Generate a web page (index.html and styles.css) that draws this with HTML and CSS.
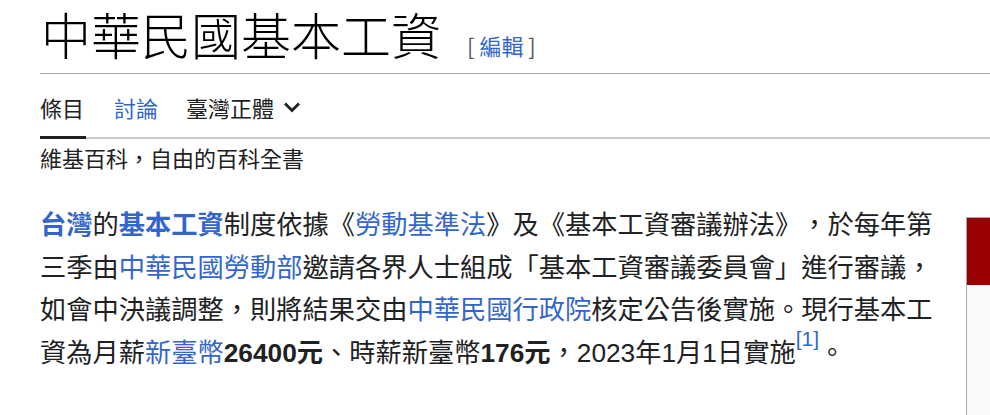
FILE: index.html
```html
<!DOCTYPE html>
<html lang="zh-Hant">
<head>
<meta charset="utf-8">
<title>中華民國基本工資</title>
<link rel="stylesheet" href="styles.css">
</head>
<body>
<div class="page">
  <header class="title-bar">
    <h1 class="title">中華民國基本工資</h1>
    <span class="edit"><span class="bracket">[</span> <a class="link" href="#">編輯</a> <span class="bracket">]</span></span>
  </header>
  <nav class="tabs">
    <a class="tab tab-active" href="#">條目</a>
    <a class="tab link" href="#">討論</a>
    <a class="tab tab-variant" href="#">臺灣正體
      <svg class="chev" width="18" height="18" viewBox="0 0 18 18"><path d="M2 5.5 L9 12.5 L16 5.5" fill="none" stroke="#202122" stroke-width="2.8"/></svg>
    </a>
  </nav>
  <div class="tagline">維基百科，自由的百科全書</div>
  <div class="content">
    <p class="lead"><a class="link strong" href="#">台灣</a>的<a class="link strong" href="#">基本工資</a>制度依據《<a class="link" href="#">勞動基準法</a>》及《基本工資審議辦法》，於每年第三季由<a class="link" href="#">中華民國勞動部</a>邀請各界人士組成「基本工資審議委員會」進行審議，如會中決議調整，則將結果交由<a class="link" href="#">中華民國行政院</a>核定公告後實施。現行基本工資為月薪<a class="link" href="#">新臺幣</a><b>26400元</b>、時薪新臺幣<b>176元</b>，2023年1月1日實施<sup class="ref"><a class="link" href="#">[1]</a></sup>。</p>
    <aside class="infobox">
      <div class="infobox-head"></div>
      <div class="infobox-body"></div>
    </aside>
  </div>
</div>
</body>
</html>
```
FILE: styles.css
```css
html, body {
  margin: 0;
  padding: 0;
  background: #ffffff;
}
body {
  overflow: hidden;
  width: 990px;
  height: 415px;
  color: #202122;
  font-family: "Liberation Sans", "Noto Sans CJK TC", sans-serif;
  text-spacing-trim: space-all;
}
.page {
  padding-left: 40px;
}
.link {
  color: #3366cc;
  text-decoration: none;
}
.title-bar {
  display: flex;
  align-items: baseline;
  gap: 26px;
  padding-top: 8px;
  padding-bottom: 12px;
  border-bottom: 1px solid #a2a9b1;
}
.title {
  margin: 0;
  font-family: "Noto Sans CJK TC", sans-serif;
  font-weight: 300;
  font-size: 50px;
  line-height: 50px;
  color: #000;
  padding-left: 1px;
}
.edit {
  font-family: "Noto Sans CJK TC", sans-serif;
  font-size: 22px;
  color: #54595d;
}
.tabs {
  display: flex;
  gap: 28px;
  margin-top: 20px;
  border-bottom: 2px solid #c8ccd1;
  font-family: "Noto Sans CJK TC", sans-serif;
  font-size: 22px;
  line-height: 26px;
}
.tab {
  display: flex;
  align-items: center;
  text-decoration: none;
  color: #202122;
  padding: 0 0 16px;
  margin-bottom: -2px;
  border-bottom: 3px solid transparent;
}
.tab.link {
  color: #3366cc;
}
.tab-active {
  padding: 0 2px 16px 0;
  border-bottom-color: #202122;
}
.tab-variant .chev {
  margin-left: 9px;
}
.tagline {
  margin-top: 5px;
  font-family: "Noto Sans CJK TC", sans-serif;
  font-size: 22px;
  line-height: 26px;
}
.content {
  display: flex;
  align-items: flex-start;
  margin-top: 34px;
}
.lead {
  flex: 0 0 900px;
  margin: 0;
  font-size: 26.25px;
  line-height: 42.5px;
}
.strong {
  font-weight: 700;
}
.lead b {
  font-weight: 700;
}
.ref {
  font-size: 21px;
  line-height: 0;
  vertical-align: 0.75em;
}
.infobox {
  flex: 0 0 300px;
  margin-left: 26px;
  margin-top: 13px;
  border-left: 1px solid #a2a9b1;
  border-top: 1px solid #a2a9b1;
  background: #f8f9fa;
}
.infobox-head {
  height: 67px;
  background: #990000;
}
.infobox-body {
  height: 200px;
}
```
